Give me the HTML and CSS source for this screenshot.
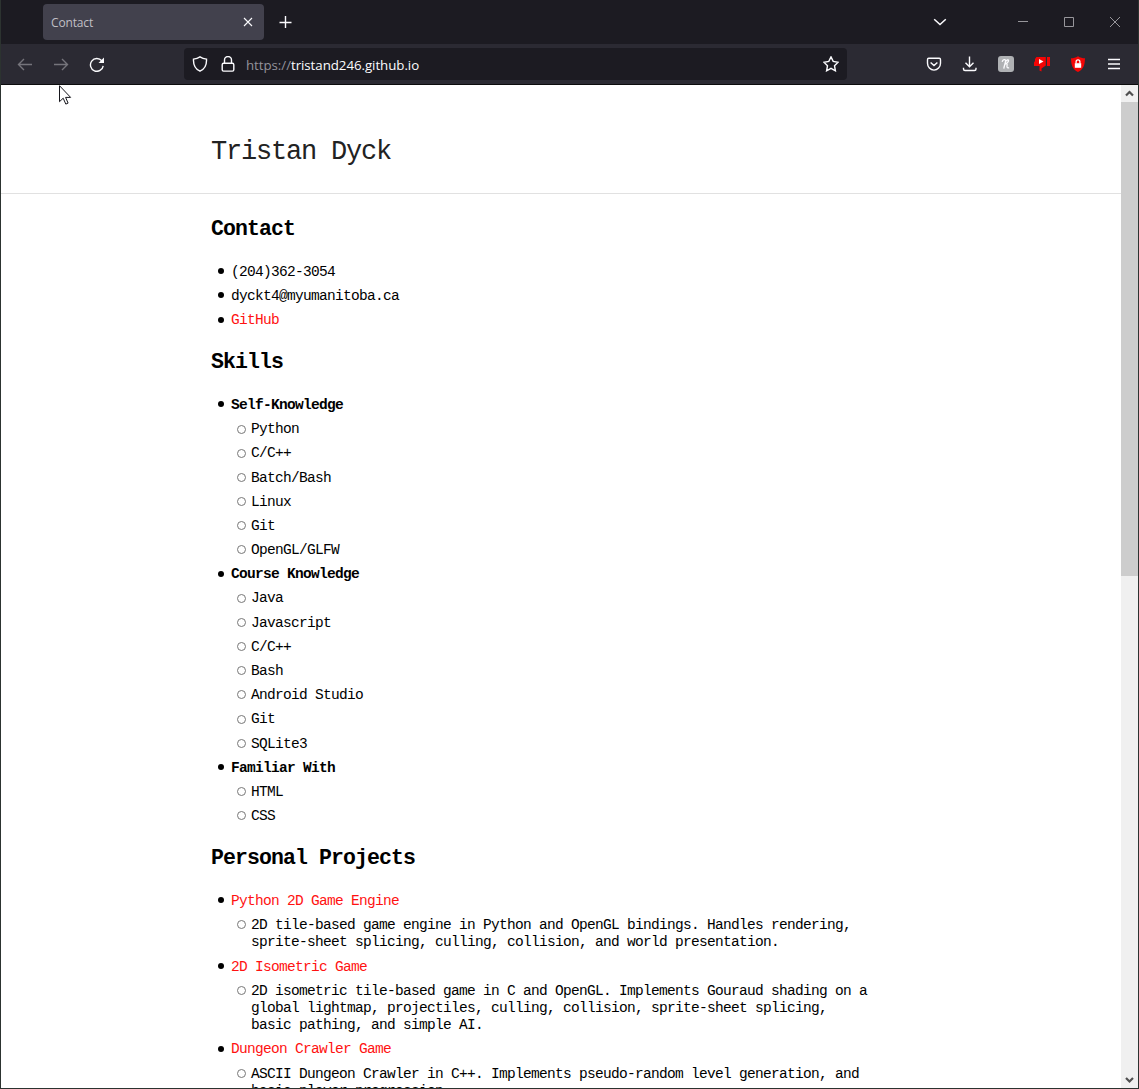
FILE: index.html
```
<!DOCTYPE html>
<html lang="en">
<head>
<meta charset="utf-8">
<title>Contact</title>
<link rel="stylesheet" href="styles.css">
</head>
<body>
<div class="browser">
  <div class="tabs">
    <div class="tab"><span>Contact</span>
      <svg class="tab-close" width="10" height="10" viewBox="0 0 10 10"><path d="M1 1l8 8M9 1l-8 8"/></svg>
    </div>
    <svg class="new-tab" width="14" height="14" viewBox="0 0 14 14"><path d="M6.500 1v12M.5 7.500h12"/></svg>
    <div class="window-controls">
      <svg class="chevron" width="14" height="8" viewBox="0 0 14 8"><path d="M1.2 1.2L7 6.6l5.800-5.400"/></svg>
      <svg width="10" height="10" viewBox="0 0 10 10"><path d="M0 4.500h10"/></svg>
      <svg width="10" height="10" viewBox="0 0 10 10"><path d="M.5.5h9v9h-9z"/></svg>
      <svg width="10" height="10" viewBox="0 0 10 10"><path d="M0 0l10 10M10 0L0 10"/></svg>
    </div>
  </div>
  <div class="toolbar">
    <div class="nav">
      <svg class="off" width="16" height="16" viewBox="0 0 16 16"><path d="M15 8.500H1.500M7 3L1.500 8.500 7 14"/></svg>
      <svg class="off" width="16" height="16" viewBox="0 0 16 16"><path d="M1 8.500h13.500M9 3L14.500 8.500 9 14"/></svg>
      <svg width="16" height="16" viewBox="0 0 16 16"><path d="M14.200 9.800A6.400 6.400 0 1 1 12.800 4.800"/><path class="solid" d="M15 1.500V7H9.500z"/></svg>
    </div>
    <div class="address">
      <svg width="16" height="16" viewBox="0 0 16 16"><path d="M8 .8c2 1.300 4.200 2 6.500 2.300.3 5.300-1 9.700-6.500 12.100C2.500 12.800 1.200 8.400 1.500 3.100 3.800 2.800 6 2.100 8 .8z"/></svg>
      <svg width="14" height="16" viewBox="0 0 14 16"><path d="M3.500 7V4a3.500 3.500 0 0 1 7 0v3M2.600 7.300h8.800q1.400 0 1.400 1.400v5q0 1.400-1.400 1.400H2.600q-1.400 0-1.400-1.400v-5q0-1.400 1.400-1.400z"/></svg>
      <span class="url"><span class="scheme">https://</span>tristand246.github.io</span>
      <svg class="star" width="16" height="16" viewBox="0 0 16 16"><path d="M8 .9l2.200 4.500 4.900.8-3.600 3.500.9 5.100L8 12.400l-4.400 2.400.9-5.100L.9 6.200l4.900-.8z"/></svg>
    </div>
    <div class="tools">
      <svg width="16" height="16" viewBox="0 0 16 16"><path d="M2.700 2.200h10.600q1.200 0 1.200 1.500v3.600a6.500 6.800 0 0 1-13 0V3.700q0-1.500 1.200-1.500zM4.600 6.400L8 9.600l3.400-3.200"/></svg>
      <svg width="16" height="16" viewBox="0 0 16 16"><path d="M7.500.5v10M3.500 6.800l4 4 4-4M1.500 11.700v1.300q0 1.500 1.500 1.500h9.500q1.500 0 1.500-1.500v-1.300"/></svg>
      <svg width="16" height="16" viewBox="0 0 16 16"><rect class="grey" width="16" height="16" rx="3"/><path class="script" d="M4.200 5.800C4.500 3.600 7.800 2.800 7.600 4.800 7.400 7 6.300 9.500 5.800 12.600M6.400 9.200c1.500-2 3-1.900 2.700-.2-.3 1.800-.3 3.400 2 2.600M7.700 7.400C9.500 7 10.900 5.500 10.500 4.300 10 3.200 8.600 4 8.500 5.500"/></svg>
      <svg width="16" height="16" viewBox="0 0 16 16"><path class="red" d="M2.500 1H11.800v8.500L7.500 12.500V15.500L5.500 14.500V10H0V6.500L1 5 1 3zM13 1h3v9h-3z"/><path class="white" d="M5 3l4.500 2.500L5 8z"/></svg>
      <svg width="16" height="16" viewBox="0 0 16 16"><path class="red" d="M8 .2c2.300 1.600 4.600 2 7 2-.2 7-1.500 11-7 13.800C2.500 13.200 1.200 9.200 1 2.200c2.400 0 4.700-.4 7-2z"/><path class="white" d="M4.800 7.200h6.400v4.600H4.800z"/><path class="lock" d="M6.100 7.500V5.700a1.900 1.900 0 0 1 3.800 0v1.800"/></svg>
      <svg width="16" height="16" viewBox="0 0 16 16"><path d="M2 3.500h12M2 8h12M2 12.500h12"/></svg>
    </div>
  </div>
  <div class="view">
    <main class="page">
      <header class="masthead"><h1>Tristan Dyck</h1></header>
      <div class="content">
        <h2>Contact</h2>
        <ul>
          <li>(204)362-3054</li>
          <li>dyckt4@myumanitoba.ca</li>
          <li><a>GitHub</a></li>
        </ul>
        <h2>Skills</h2>
        <ul>
          <li><b>Self-Knowledge</b></li>
          <li class="sub">Python</li>
          <li class="sub">C/C++</li>
          <li class="sub">Batch/Bash</li>
          <li class="sub">Linux</li>
          <li class="sub">Git</li>
          <li class="sub">OpenGL/GLFW</li>
          <li><b>Course Knowledge</b></li>
          <li class="sub">Java</li>
          <li class="sub">Javascript</li>
          <li class="sub">C/C++</li>
          <li class="sub">Bash</li>
          <li class="sub">Android Studio</li>
          <li class="sub">Git</li>
          <li class="sub">SQLite3</li>
          <li><b>Familiar With</b></li>
          <li class="sub">HTML</li>
          <li class="sub">CSS</li>
        </ul>
        <h2>Personal Projects</h2>
        <ul>
          <li><a>Python 2D Game Engine</a></li>
          <li class="sub">2D tile-based game engine in Python and OpenGL bindings. Handles rendering,<br>sprite-sheet splicing, culling, collision, and world presentation.</li>
          <li><a>2D Isometric Game</a></li>
          <li class="sub">2D isometric tile-based game in C and OpenGL. Implements Gouraud shading on a<br>global lightmap, projectiles, culling, collision, sprite-sheet splicing,<br>basic pathing, and simple AI.</li>
          <li><a>Dungeon Crawler Game</a></li>
          <li class="sub">ASCII Dungeon Crawler in C++. Implements pseudo-random level generation, and<br>basic player progression.</li>
        </ul>
      </div>
    </main>
    <div class="scrollbar">
      <svg width="17" height="17" viewBox="0 0 17 17"><path d="M5 10.500L8.500 7l3.500 3.500"/></svg>
      <div class="thumb"></div>
      <svg width="17" height="17" viewBox="0 0 17 17"><path d="M5 7l3.500 3.500L12 7"/></svg>
    </div>
  </div>
</div>
<svg class="cursor" width="13" height="20" viewBox="0 0 13 20"><path d="M.5.700v16l3.700-3.500 2.600 5.900 2.300-1-2.500-5.700h5z"/></svg>
</body>
</html>
```
FILE: styles.css
```
* { box-sizing: border-box; }
body { margin: 0; background: #fff; }
svg { display: block; flex: none; fill: none; stroke: #fbfbfe; stroke-width: 1.4; }
.browser {
  display: flex;
  flex-direction: column;
  width: 1139px;
  height: 1089px;
  overflow: hidden;
  border: solid #2c3330;
  border-width: 0 1px 1px;
  font-family: "Open Sans", "Noto Sans", sans-serif;
}
.tabs {
  display: flex;
  align-items: center;
  flex: none;
  height: 44px;
  padding-left: 42px;
  background: #1c1b22;
}
.tab {
  display: flex;
  align-items: center;
  justify-content: space-between;
  width: 221px;
  height: 36px;
  padding: 0 11px 0 8px;
  border-radius: 4px;
  background: #42414d;
  color: #c0bfc5;
  font-size: 12px;
  letter-spacing: -.15px;
}
.tab-close { stroke-width: 1.1; }
.new-tab { margin-left: 15px; }
.window-controls {
  display: flex;
  align-items: center;
  gap: 36px;
  margin-left: auto;
  padding-right: 18px;
}
.window-controls svg { stroke: #97969b; stroke-width: 1; }
.window-controls .chevron { margin-right: 35px; stroke: #fbfbfe; stroke-width: 1.5; }
.toolbar {
  display: flex;
  align-items: center;
  flex: none;
  height: 41px;
  padding: 0 16px;
  border-bottom: 1px solid #0c0c0d;
  background: #2b2a33;
}
.nav { display: flex; gap: 20px; width: 167px; }
.nav .off { stroke: #75747b; }
svg .solid { fill: #fbfbfe; stroke: none; }
.address {
  display: flex;
  align-items: center;
  width: 663px;
  height: 32px;
  padding: 0 8px;
  border-radius: 4px;
  background: #1c1b22;
  color: #fbfbfe;
}
.address svg + svg { margin-left: 13px; }
.url { margin: 2px 0 0 11px; font-size: 13.300px; letter-spacing: -.05px; white-space: nowrap; }
.scheme { color: #93929a; }
.star { margin-left: auto; }
.tools { display: flex; gap: 20px; margin-left: auto; }
svg .grey { fill: #afb1b4; stroke: none; }
svg .script { stroke-width: 1.3; }
svg .red { fill: #f30505; stroke: none; }
svg .white { fill: #fff; stroke: none; }
svg .lock { stroke: #fff; stroke-width: 1.3; }
.view { display: flex; flex: 1; min-height: 0; background: #fff; }
.page {
  flex: 1;
  overflow: hidden;
  color: #000;
  font-family: "Liberation Mono", monospace;
}
.masthead { height: 109px; padding: 51px 210px 0; border-bottom: 1px solid #e1e1e1; }
h1 {
  margin: 0;
  color: #222;
  font-size: 27px;
  font-weight: 400;
  line-height: 33px;
  letter-spacing: -1.200px;
}
.content { padding: 0 210px; white-space: nowrap; }
h2 {
  margin: 19.700px 0 21.900px;
  font-size: 21.500px;
  line-height: 26px;
  letter-spacing: -.9px;
}
h2:first-child { margin-top: 22px; }
ul {
  margin: 0;
  padding-left: 20px;
  list-style: none;
  font-size: 14.500px;
  line-height: 17.300px;
  letter-spacing: -.7px;
}
li { position: relative; margin-bottom: 6.880px; }
li::before {
  content: "";
  position: absolute;
  left: -13.500px;
  top: 4.300px;
  width: 6px;
  height: 6px;
  border-radius: 50%;
  background: #000;
}
.sub { margin-left: 20px; }
.sub::before { left: -14.500px; top: 3.300px; width: 7px; height: 7px; border: 1px solid #777; background: none; }
a { color: #f11; }
.scrollbar { display: flex; flex-direction: column; width: 17px; background: #f0f0f0; }
.scrollbar svg { stroke: #505050; stroke-width: 2.200; }
.thumb { height: 474px; margin-bottom: auto; background: #cdcdcd; }
.cursor { position: absolute; left: 59px; top: 85px; fill: #fff; stroke: #16161c; stroke-width: 1; }
```
